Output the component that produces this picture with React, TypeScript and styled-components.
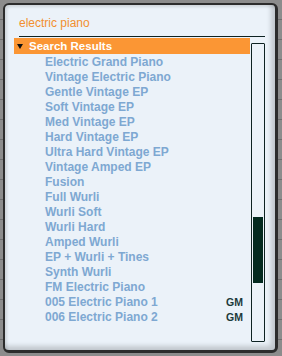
import React from 'react';
import styled, { createGlobalStyle } from 'styled-components';

const results: { name: string; tag?: string }[] = [
  { name: 'Electric Grand Piano' },
  { name: 'Vintage Electric Piano' },
  { name: 'Gentle Vintage EP' },
  { name: 'Soft Vintage EP' },
  { name: 'Med Vintage EP' },
  { name: 'Hard Vintage EP' },
  { name: 'Ultra Hard Vintage EP' },
  { name: 'Vintage Amped EP' },
  { name: 'Fusion' },
  { name: 'Full Wurli' },
  { name: 'Wurli Soft' },
  { name: 'Wurli Hard' },
  { name: 'Amped Wurli' },
  { name: 'EP + Wurli + Tines' },
  { name: 'Synth Wurli' },
  { name: 'FM Electric Piano' },
  { name: '005 Electric Piano 1', tag: 'GM' },
  { name: '006 Electric Piano 2', tag: 'GM' },
];

const App = () => {
  return (
    <>
      <GlobalStyle />
      <Backdrop>
        <Panel>
          <SearchBox>
            <SearchText>electric piano</SearchText>
          </SearchBox>
          <Body>
            <List>
              <GroupHeader>
                <Arrow />
                Search Results
              </GroupHeader>
              {results.map((r) => (
                <Row key={r.name}>
                  <Name>{r.name}</Name>
                  {r.tag && <Tag>{r.tag}</Tag>}
                </Row>
              ))}
            </List>
            <ScrollTrack>
              <ScrollThumb />
            </ScrollTrack>
          </Body>
        </Panel>
      </Backdrop>
    </>
  );
};

const GlobalStyle = createGlobalStyle`
  body {
    margin: 0;
    background: #8a8a8a;
    font-family: 'Liberation Sans', Arial, sans-serif;
  }
`;

const Backdrop = styled.div`
  width: 282px;
  height: 356px;
  padding: 3px 0 0 3px;
  box-sizing: border-box;
  background: repeating-linear-gradient(
    to bottom,
    #8c8c8c 0px,
    #8c8c8c 19px,
    #6e6e6e 19px,
    #6e6e6e 20px
  );
`;

const Panel = styled.div`
  width: 275px;
  height: 350px;
  box-sizing: border-box;
  border: 2px solid #2c2c2c;
  border-right-width: 3px;
  border-bottom-width: 3px;
  border-radius: 6px;
  background: #ebf2f9;
  box-shadow: inset -4px -4px 5px rgba(0, 0, 0, 0.18),
    inset 2px 2px 3px rgba(0, 0, 0, 0.12);
  padding: 11px 0 0 9px;
  display: flex;
  flex-direction: column;
`;

const SearchBox = styled.div`
  width: 246px;
  margin-left: 5px;
  padding-bottom: 6px;
  border-bottom: 1px solid #0d2222;
  margin-bottom: 1px;
`;

const SearchText = styled.div`
  font-size: 12px;
  line-height: 14px;
  color: #f28f2e;
`;

const Body = styled.div`
  display: flex;
  gap: 1px;
`;

const List = styled.div`
  width: 236px;
  display: flex;
  flex-direction: column;
`;

const GroupHeader = styled.div`
  height: 16px;
  background: #fb9634;
  color: #ffffff;
  font-size: 11.5px;
  font-weight: bold;
  line-height: 16px;
  display: flex;
  align-items: center;
  gap: 6px;
  padding-left: 3px;
`;

const Arrow = styled.span`
  width: 0;
  height: 0;
  border-left: 3.5px solid transparent;
  border-right: 3.5px solid transparent;
  border-top: 5px solid #111;
`;

const Row = styled.div`
  height: 15px;
  display: flex;
  align-items: center;
  justify-content: space-between;
  padding: 0 7px 0 31px;
`;

const Name = styled.span`
  font-size: 12px;
  font-weight: bold;
  color: #7ea8d2;
`;

const Tag = styled.span`
  font-size: 10.5px;
  font-weight: bold;
  color: #1c3a3a;
`;

const ScrollTrack = styled.div`
  margin-top: 5px;
  width: 14px;
  height: 299px;
  box-sizing: border-box;
  border: 1px solid #0d2222;
  border-radius: 1px;
  padding: 173px 1px 0 1px;
`;

const ScrollThumb = styled.div`
  height: 66px;
  background: #032a20;
`;

export default App;
